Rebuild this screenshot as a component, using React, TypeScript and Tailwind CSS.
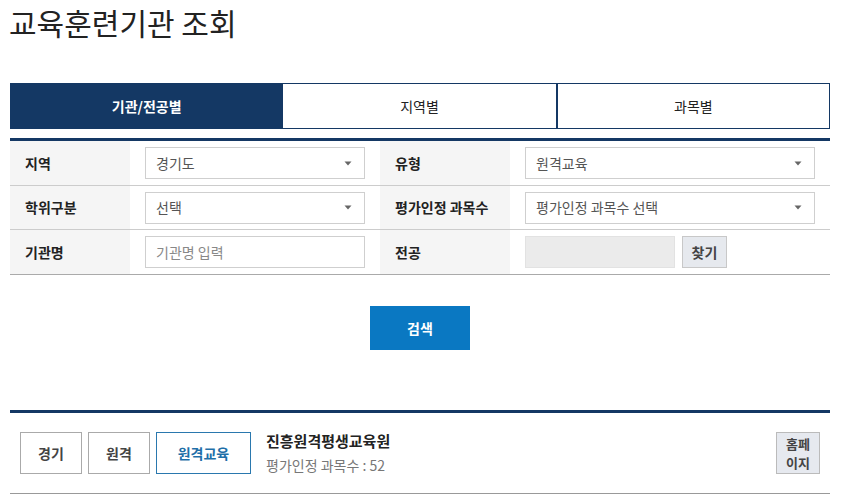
import React from "react";

const Arrow = () => (
  <svg width="8" height="5" viewBox="0 0 8 5" className="shrink-0">
    <path d="M0.5 0.5 L7.5 0.5 L4 4.5 Z" fill="#666" />
  </svg>
);

const Select = ({ text, w }: { text: string; w: string }) => (
  <div
    className={`${w} h-[32px] border border-[#cfcfcf] bg-white flex items-center justify-between pl-[10px] pr-[12px] text-[14px] text-[#555]`}
  >
    <span>{text}</span>
    <Arrow />
  </div>
);

const Label = ({ children }: { children: React.ReactNode }) => (
  <div className="bg-[#f5f5f5] flex items-center pl-[15px] text-[14px] font-bold text-[#222]">
    {children}
  </div>
);

export default function App() {
  return (
    <div className="w-[841px] h-[501px] bg-white overflow-hidden font-['Noto_Sans_CJK_KR','Noto_Sans',sans-serif]">
      <div className="w-[820px] ml-[10px]">
        <h1 className="text-[30px] leading-[44px] text-[#222] font-normal -ml-[1px]">
          교육훈련기관 조회
        </h1>

        <div className="mt-[39px] grid grid-cols-3 h-[46px] text-[14px]">
          <div className="bg-[#143864] text-white font-bold flex items-center justify-center">
            기관/전공별
          </div>
          <div className="border border-[#143864] border-l-0 flex items-center justify-center text-[#222]">
            지역별
          </div>
          <div className="border border-[#143864] border-l flex items-center justify-center text-[#222]">
            과목별
          </div>
        </div>

        <div className="mt-[9px] border-t-[3px] border-[#143864]">
          <div className="grid grid-cols-[120px_250px_130px_320px] h-[45px] border-b border-[#cccccc]">
            <Label>지역</Label>
            <div className="flex items-center pl-[15px]">
              <Select text="경기도" w="w-[220px]" />
            </div>
            <Label>유형</Label>
            <div className="flex items-center pl-[15px]">
              <Select text="원격교육" w="w-[290px]" />
            </div>
          </div>
          <div className="grid grid-cols-[120px_250px_130px_320px] h-[44px] border-b border-[#cccccc]">
            <Label>학위구분</Label>
            <div className="flex items-center pl-[15px]">
              <Select text="선택" w="w-[220px]" />
            </div>
            <Label>평가인정 과목수</Label>
            <div className="flex items-center pl-[15px]">
              <Select text="평가인정 과목수 선택" w="w-[290px]" />
            </div>
          </div>
          <div className="grid grid-cols-[120px_250px_130px_320px] h-[45px] border-b border-[#aaaaaa]">
            <Label>기관명</Label>
            <div className="flex items-center pl-[15px]">
              <div className="w-[220px] h-[32px] border border-[#cfcfcf] bg-white flex items-center pl-[10px] text-[14px] text-[#888]">
                기관명 입력
              </div>
            </div>
            <Label>전공</Label>
            <div className="flex items-center pl-[15px] gap-[7px]">
              <div className="w-[150px] h-[32px] bg-[#ebebeb] border border-[#e2e2e2]" />
              <div className="w-[45px] h-[32px] bg-[#e6e9ee] border border-[#c8c8c8] flex items-center justify-center text-[14px] font-bold text-[#444]">
                찾기
              </div>
            </div>
          </div>
        </div>

        <div className="flex justify-center mt-[31px]">
          <div className="w-[100px] h-[44px] bg-[#0a78c2] text-white font-bold text-[14px] flex items-center justify-center">
            검색
          </div>
        </div>

        <div className="mt-[60px] border-t-[3px] border-[#143864]">
          <div className="flex items-center justify-between px-[10px] pt-[18px] pb-[18px] border-b border-[#999]">
            <div className="flex items-center">
              <div className="flex gap-[6px]">
                <div className="w-[62px] h-[42px] border border-[#aaaaaa] flex items-center justify-center text-[14px] font-bold text-[#444]">
                  경기
                </div>
                <div className="w-[62px] h-[42px] border border-[#aaaaaa] flex items-center justify-center text-[14px] font-bold text-[#444]">
                  원격
                </div>
                <div className="w-[95px] h-[42px] border border-[#2a78ae] flex items-center justify-center text-[14px] font-bold text-[#1f6fa8]">
                  원격교육
                </div>
              </div>
              <div className="ml-[15px] flex flex-col">
                <span className="text-[15px] font-bold text-[#222] leading-[20px]">
                  진흥원격평생교육원
                </span>
                <span className="text-[14px] text-[#777] leading-[20px] mt-[4px]">
                  평가인정 과목수 : 52
                </span>
              </div>
            </div>
            <div className="w-[44px] h-[42px] bg-[#e6e9ef] border border-[#bbbbbb] flex flex-col items-center justify-center text-[13px] font-bold text-[#444] leading-[19px]">
              <span>홈페</span>
              <span>이지</span>
            </div>
          </div>
        </div>
      </div>
    </div>
  );
}
